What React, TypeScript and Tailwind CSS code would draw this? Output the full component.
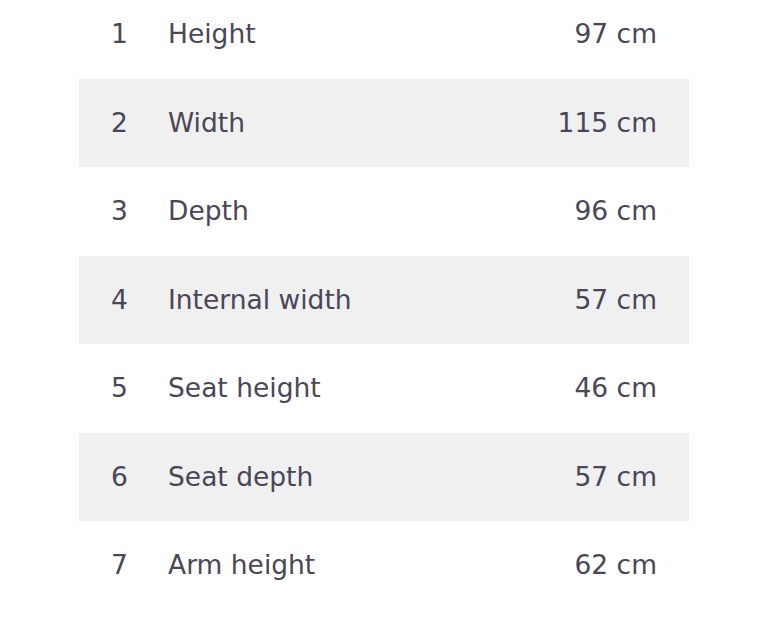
const rows = [
  { n: 1, label: "Height", value: "97 cm" },
  { n: 2, label: "Width", value: "115 cm" },
  { n: 3, label: "Depth", value: "96 cm" },
  { n: 4, label: "Internal width", value: "57 cm" },
  { n: 5, label: "Seat height", value: "46 cm" },
  { n: 6, label: "Seat depth", value: "57 cm" },
  { n: 7, label: "Arm height", value: "62 cm" },
];

export default function App() {
  return (
    <div className="min-h-screen bg-white overflow-hidden font-['DejaVu_Sans',sans-serif] text-[#4a4658]">
      <div className="w-[610px] mx-auto mt-[-10px]">
        {rows.map((row) => (
          <div
            key={row.n}
            className={`h-[88.5px] flex items-center pl-8 pr-8 text-[26.5px] ${row.n % 2 === 0 ? "bg-[#f0f0f0]" : ""}`}
          >
            <span className="w-[57px] shrink-0">{row.n}</span>
            <span className="flex-1">{row.label}</span>
            <span>{row.value}</span>
          </div>
        ))}
      </div>
    </div>
  );
}
